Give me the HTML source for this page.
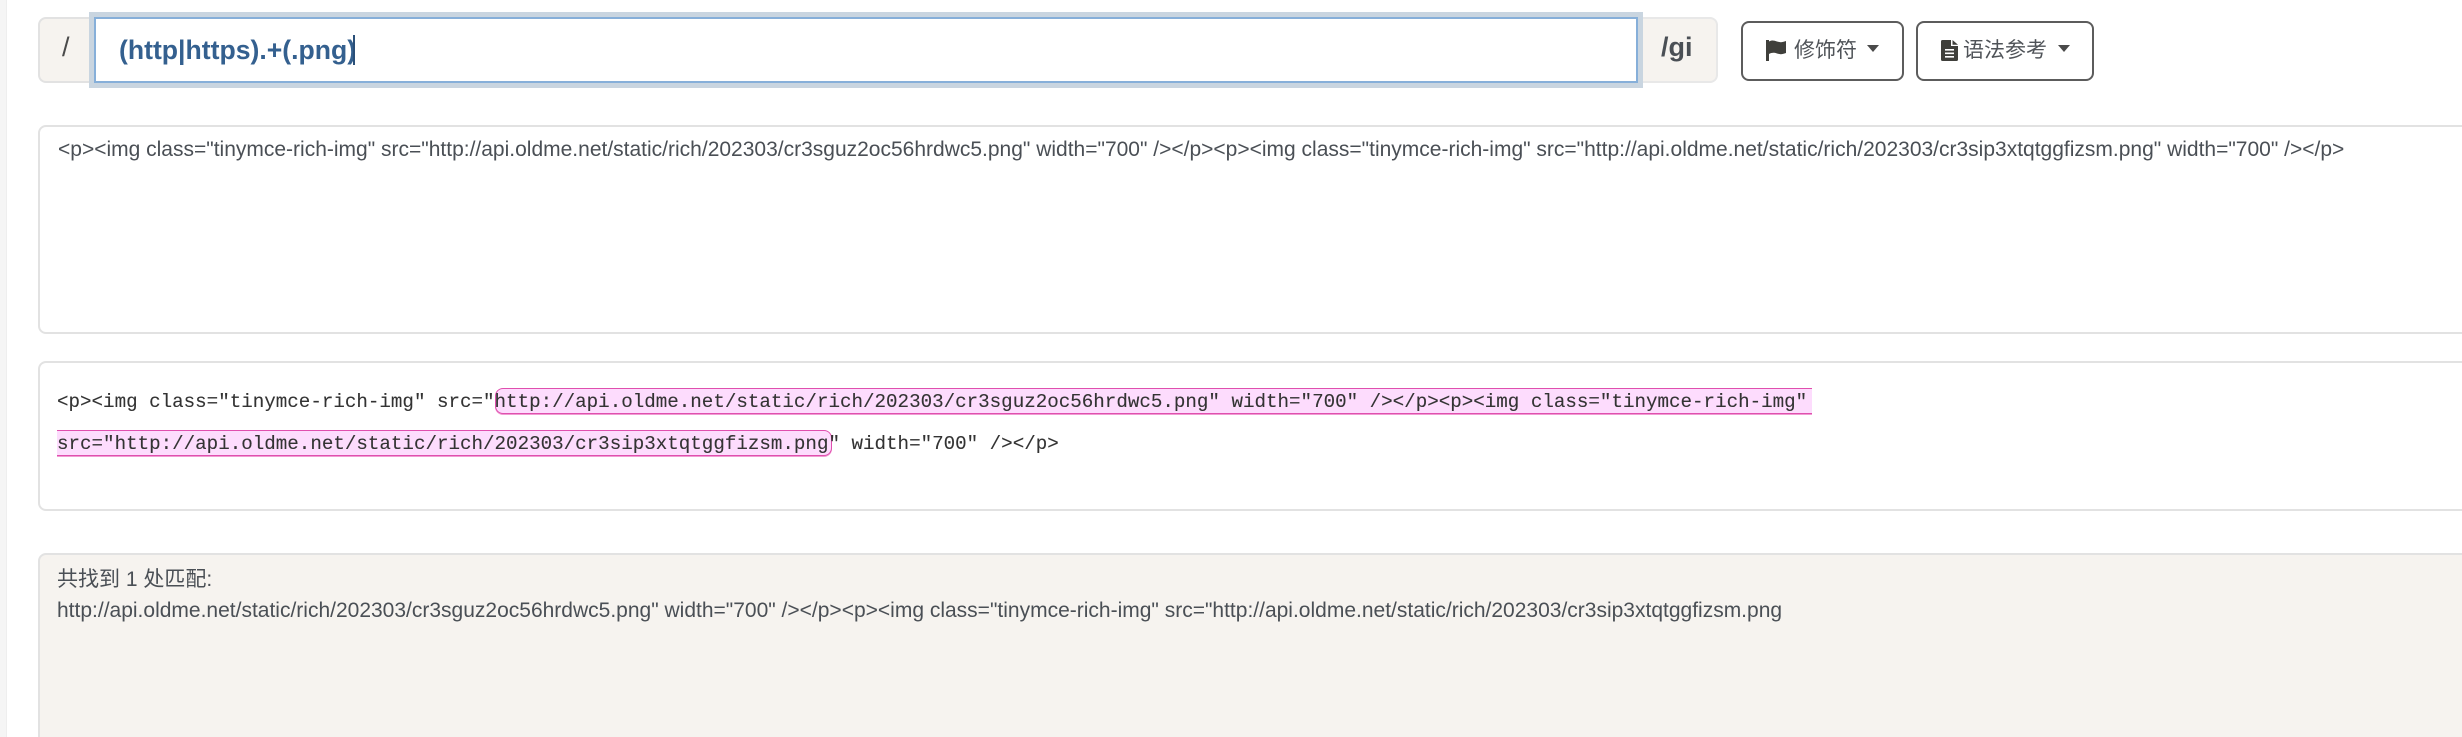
<!DOCTYPE html>
<html><head><meta charset="utf-8"><style>
html,body{margin:0;padding:0;width:2462px;height:737px;overflow:hidden;background:#fff}
body{position:relative;font-family:"Liberation Sans","Noto Sans CJK SC",sans-serif;color:#4a4f55;font-size:21px}
div,span{position:absolute;box-sizing:border-box;white-space:pre}
.t{line-height:28px}
.hl{background:#fddcfd;border:1px solid #e04fae;box-shadow:0 1px 0 #ef9bd2}
.m{font-family:"Liberation Mono",monospace;font-size:19.2px;line-height:26px;color:#333;letter-spacing:0;-webkit-text-stroke:.1px #333}
.btn{border:2px solid #5c5c5c;border-radius:8px;height:60px;top:21px;background:#fff}
.caret{width:0;height:0;border-left:6px solid transparent;border-right:6px solid transparent;border-top:7px solid #4a4a4a;top:45px}
.cjk{font-size:21px;line-height:28px;color:#4f5358;top:37px}
</style></head><body>
<div style="left:0;top:0;width:7px;height:737px;background:#f5f5f5;border-right:1px solid #eee"></div>

<div style="left:38px;top:17px;width:70px;height:66px;background:#f6f3ef;border:2px solid #e2e2e2;border-right:0;border-radius:8px 0 0 8px"></div>
<div style="left:1620px;top:17px;width:98px;height:66px;background:#f6f3ef;border:2px solid #e8e8e8;border-left:0;border-radius:0 8px 8px 0"></div>
<div style="left:89px;top:12px;width:1554px;height:76px;background:#c9d5e0"></div>
<div style="left:94px;top:17px;width:1544px;height:66px;background:#fff;border:2px solid #86afd9"></div>
<div style="left:62px;top:30px;line-height:34px;font-size:27px;color:#4a4a4a">/</div>
<div style="left:119px;top:32px;line-height:36px;font-size:26.6px;font-weight:bold;color:#34608f">(http|https).+(.png)</div>
<div style="left:353px;top:35px;width:2px;height:30px;background:#2a4f78"></div>
<div style="left:1661px;top:30px;line-height:34px;font-size:27px;font-weight:bold;color:#4a4f55">/gi</div>

<div class="btn" style="left:1741px;width:163px"></div>
<svg style="position:absolute;left:1765px;top:39px" width="23" height="22" viewBox="0 0 23 22"><path d="M1 1h3v1.500c3-1.500 5-1 8 0s5 1 9-.5v12c-4 1.500-6 1.500-9 .5s-5-1-8 .5v7H1z" fill="#3f3f3b"/></svg>
<div class="cjk" style="left:1794px">修饰符</div>
<div class="caret" style="left:1867px"></div>

<div class="btn" style="left:1916px;width:178px"></div>
<svg style="position:absolute;left:1941px;top:40px" width="17" height="21" viewBox="0 0 17 21"><path d="M0 1.500A1.500 1.500 0 0 1 1.500 0H10v6h7v13.500a1.500 1.500 0 0 1-1.500 1.500h-14A1.500 1.500 0 0 1 0 19.500z" fill="#3f3f3b"/><path d="M11.500 0L17 4.800H11.500z" fill="#3f3f3b"/><path d="M4 9h9v1.600H4zM4 12.500h9v1.600H4zM4 16h9v1.600H4z" fill="#fff"/></svg>
<div class="cjk" style="left:1963px">语法参考</div>
<div class="caret" style="left:2058px"></div>

<div style="left:38px;top:125px;width:2460px;height:209px;border:2px solid #e2e2e2;border-radius:8px;background:#fff"></div>
<div class="t" style="left:58px;top:136px;color:#4a4f55">&lt;p&gt;&lt;img class="tinymce-rich-img" src="http://api.oldme.net/static/rich/202303/cr3sguz2oc56hrdwc5.png" width="700" /&gt;&lt;/p&gt;&lt;p&gt;&lt;img class="tinymce-rich-img" src="http://api.oldme.net/static/rich/202303/cr3sip3xtqtggfizsm.png" width="700" /&gt;&lt;/p&gt;</div>

<div style="left:38px;top:361px;width:2460px;height:150px;border:2px solid #e2e2e2;border-radius:8px;background:#fff"></div>
<div class="hl" style="left:495px;top:388px;width:1317px;height:26px;border-right:0;border-radius:8px 0 0 8px"></div>
<div class="hl" style="left:57px;top:430px;width:775px;height:26px;border-left:0;border-radius:0 8px 8px 0"></div>
<div class="m" style="left:57px;top:389px">&lt;p&gt;&lt;img class="tinymce-rich-img" src="http://api.oldme.net/static/rich/202303/cr3sguz2oc56hrdwc5.png" width="700" /&gt;&lt;/p&gt;&lt;p&gt;&lt;img class="tinymce-rich-img"</div>
<div class="m" style="left:57px;top:431px">src="http://api.oldme.net/static/rich/202303/cr3sip3xtqtggfizsm.png" width="700" /&gt;&lt;/p&gt;</div>

<div style="left:38px;top:553px;width:2460px;height:220px;border:2px solid #e2e2e2;border-radius:8px;background:#f6f3ef"></div>
<div class="t" style="left:57px;top:566px">共找到 1 处匹配:</div>
<div class="t" style="left:57px;top:597px">http://api.oldme.net/static/rich/202303/cr3sguz2oc56hrdwc5.png" width="700" /&gt;&lt;/p&gt;&lt;p&gt;&lt;img class="tinymce-rich-img" src="http://api.oldme.net/static/rich/202303/cr3sip3xtqtggfizsm.png</div>
</body></html>
